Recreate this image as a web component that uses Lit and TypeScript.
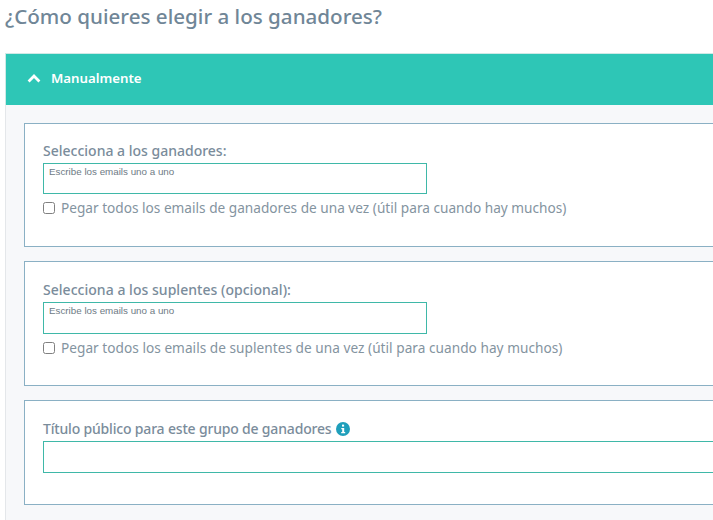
import { LitElement, html, css } from "lit";
import { customElement } from "lit/decorators.js";

@customElement("app-root")
export class AppRoot extends LitElement {
  static styles = css`
    :host { display: block; width: 713px; height: 520px; overflow: hidden; background: #fff; font-family: "Noto Sans", "Open Sans", sans-serif; color: #6f8494; }
    .page { padding: 0 0 0 5px; width: 760px; box-sizing: border-box; }
    h1 { margin: 0; height: 53px; padding-top: 3px; box-sizing: border-box; font-size: 20.6px; line-height: 26px; font-weight: 500; color: #708697; }
    .acc { border-left: 1px solid #e4e7ea; background: #f7f8fa; padding-bottom: 16px; }
    .head { height: 52px; margin-left: -1px; background: #2ec6b6; border-top: 1px solid #cfe9e6; border-left: 1px solid #cfe9e6; box-sizing: border-box; display: flex; align-items: center; gap: 10px; padding: 0 0 3px 21px; color: #fff; font-size: 13.25px; font-weight: 600; }
    .head svg { display: block; }
    .body { padding: 18px 0 0 18px; display: flex; flex-direction: column; gap: 14px; }
    .card { background: #fff; border: 1px solid #8ab0c4; padding: 18px 18px 0; box-sizing: border-box; }
    .c1 { height: 124px; }
    .c2 { height: 125px; }
    .c3 { height: 105px; }
    label { display: flex; align-items: center; gap: 5px; font-size: 14px; line-height: 18px; font-weight: 500; color: #7a8c9b; height: 21px; padding-bottom: 3px; box-sizing: border-box; }
    .c2 label, .c3 label { height: 22px; }
    .c2 label { letter-spacing: 0.03px; }
    .c3 label { letter-spacing: -0.18px; }
    .input { width: 384px; height: 32px; box-sizing: border-box; border: 1px solid #3fb8a8; background: #fff; padding: 2px 5px; font-family: "Liberation Sans", sans-serif; font-size: 9.8px; line-height: 11px; color: #6e7b85; }
    .c1 .input { height: 31px; }
    .wide { width: 700px; }
    .check { display: flex; align-items: center; gap: 6px; margin-top: 5px; font-size: 13.65px; line-height: 18px; color: #84949f; height: 18px; }
    .c2 .check { letter-spacing: 0.03px; }
    .box { width: 12px; height: 12px; border: 1px solid #808080; border-radius: 2.5px; box-sizing: border-box; background: #fff; flex: none; }
    .info { flex: none; display: block; }
  `;

  private group(title: string, who: string, cls: string) {
    return html`<section class="card ${cls}">
      <label>${title}</label>
      <div class="input">Escribe los emails uno a uno</div>
      <div class="check"><span class="box"></span><span>Pegar todos los emails de ${who} de una vez (útil para cuando hay muchos)</span></div>
    </section>`;
  }

  render() {
    return html`<div class="page">
      <h1>¿Cómo quieres elegir a los ganadores?</h1>
      <div class="acc">
        <div class="head">
          <svg width="14" height="10" viewBox="0 0 14 10"><path d="M1.6 8.4 L7 3 L12.4 8.4" fill="none" stroke="#fff" stroke-width="2.8"/></svg>
          <span>Manualmente</span>
        </div>
        <div class="body">
          ${this.group("Selecciona a los ganadores:", "ganadores", "c1")}
          ${this.group("Selecciona a los suplentes (opcional):", "suplentes", "c2")}
          <section class="card c3">
            <label>Título público para este grupo de ganadores
              <svg class="info" width="14" height="14" viewBox="0 0 14 14"><circle cx="7" cy="7" r="7" fill="#1f9fbb"/><rect x="6" y="2.6" width="2.1" height="2" fill="#fff"/><path d="M5.3 6h2.9v4h1v1.3H5.2V10h1V7.3h-.9z" fill="#fff"/></svg>
            </label>
            <div class="input wide"></div>
          </section>
        </div>
      </div>
    </div>`;
  }
}
